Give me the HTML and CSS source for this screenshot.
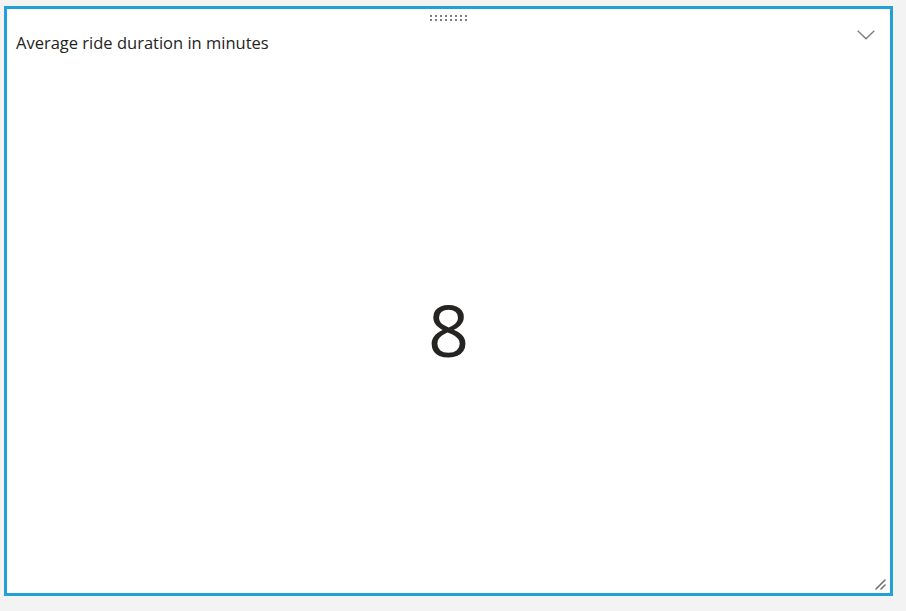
FILE: index.html
```html
<!DOCTYPE html>
<html>
<head>
<meta charset="utf-8">
<link rel="stylesheet" href="styles.css">
</head>
<body>
<div class="card">
  <div class="drag-handle">
    <span></span><span></span><span></span><span></span><span></span><span></span><span></span><span></span>
    <span></span><span></span><span></span><span></span><span></span><span></span><span></span><span></span>
  </div>
  <div class="header">
    <div class="title">Average ride duration in minutes</div>
    <svg class="chevron" width="18" height="10" viewBox="0 0 18 10"><path d="M0.7 0.7 L9 8.8 L17.3 0.7" fill="none" stroke="#7a7a7a" stroke-width="1.3"/></svg>
  </div>
  <div class="value-area">
    <div class="value">8</div>
  </div>
  <svg class="grip" width="12" height="12" viewBox="0 0 12 12"><path d="M1 11 L10 2 M6 11 L10 7" stroke="#707070" stroke-width="1.6" stroke-linecap="round"/></svg>
</div>
</body>
</html>
```
FILE: styles.css
```css
html, body {
  margin: 0;
  padding: 0;
  background: #f3f3f3;
  font-family: "Open Sans", "Noto Sans", sans-serif;
}
body {
  width: 906px;
  height: 611px;
  overflow: hidden;
}
.card {
  position: relative;
  box-sizing: border-box;
  margin: 6px 0 0 4px;
  width: 889px;
  height: 590px;
  border: 3px solid #22a1d9;
  background: #ffffff;
  display: flex;
  flex-direction: column;
}
.drag-handle {
  position: absolute;
  top: 6px;
  left: 423px;
  display: grid;
  grid-template-columns: repeat(8, 2px);
  column-gap: 3px;
  row-gap: 2px;
}
.drag-handle span {
  width: 2px;
  height: 2px;
  background: #7c7c7c;
}
.header {
  height: 56px;
  display: flex;
  justify-content: space-between;
  align-items: flex-start;
  padding: 0 15px 0 9px;
}
.title {
  margin-top: 22px;
  font-size: 16.5px;
  color: #252423;
  letter-spacing: 0;
}
.chevron {
  margin-top: 21px;
}
.value-area {
  flex: 1;
  display: flex;
  align-items: center;
  justify-content: center;
}
.value {
  font-size: 72px;
  line-height: 1;
  color: #252423;
  font-weight: 400;
}
.grip {
  position: absolute;
  right: 3px;
  bottom: 3px;
}
```
